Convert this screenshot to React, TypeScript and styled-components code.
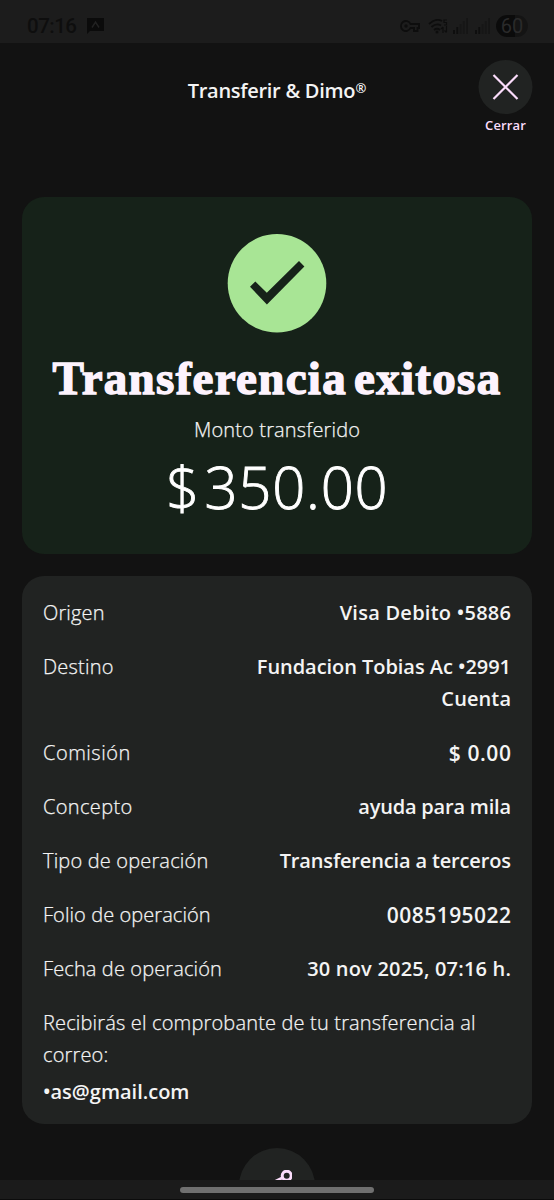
import React from "react";
import styled, { createGlobalStyle } from "styled-components";

const Global = createGlobalStyle`
  * { box-sizing: border-box; }
  html, body { margin: 0; background: #121212; }
  body { font-family: "Open Sans", "Noto Sans", sans-serif; color: #fff; }
`;

const Screen = styled.div`
  position: relative;
  width: 554px;
  height: 1200px;
  overflow: hidden;
  background: #121212;
  display: flex;
  flex-direction: column;
`;

const Text = styled.span<{ $size?: number; $weight?: number; $track?: number; $color?: string; $line?: number; $stroke?: number }>`
  font-size: ${(p) => p.$size ?? 20}px;
  font-weight: ${(p) => p.$weight ?? 300};
  letter-spacing: ${(p) => p.$track ?? 0}px;
  margin-right: ${(p) => -(p.$track ?? 0)}px;
  color: ${(p) => p.$color ?? "#f4f4f4"};
  line-height: ${(p) => p.$line ?? 32}px;
  white-space: nowrap;
  -webkit-text-stroke: ${(p) => p.$stroke ?? (p.$weight ? 0 : 0.25)}px currentColor;
`;

const StatusBar = styled.header`
  flex: none;
  height: 43px;
  padding: 9px 26px 0 27px;
  background: #1c1c1c;
  display: flex;
  justify-content: space-between;
`;

const StatusGroup = styled.div<{ $gap: number }>`
  display: flex;
  align-items: center;
  height: 34px;
  gap: ${(p) => p.$gap}px;
`;

const Clock = styled(Text)`
  font-family: Roboto, sans-serif;
`;

const WifiIcon = styled.svg`
  margin: 0 -2px 0 1px;
`;

const Battery = styled.div`
  width: 32px;
  height: 22px;
  margin-left: -1px;
  border-radius: 11px;
  background: linear-gradient(90deg, #0b0b0b 60%, #141414 60%);
  color: #2a2a2a;
  font: 400 20px/23px Roboto, sans-serif;
  text-align: center;
`;

const Header = styled.div`
  flex: none;
  height: 154px;
  padding: 17px 21px 0;
  display: grid;
  grid-template-columns: 1fr auto 1fr;
  align-items: start;
`;

const HeaderTitle = styled.div`
  grid-column: 2;
  padding-top: 15px;
  display: flex;
`;

const Mark = styled.span`
  font-size: 13px;
  font-weight: 600;
  line-height: 27px;
`;

const CloseButton = styled.button`
  justify-self: end;
  width: 55px;
  padding: 0;
  border: 0;
  background: none;
  font-family: inherit;
  display: flex;
  flex-direction: column;
  align-items: center;
`;

const Success = styled.section`
  flex: none;
  height: 357px;
  margin: 0 22px;
  padding-top: 37px;
  border-radius: 22px;
  background: #162219;
  display: flex;
  flex-direction: column;
  align-items: center;
`;

const Title = styled.h1`
  margin: 17px 0 8px;
  font-family: "Liberation Serif", serif;
  font-size: 47px;
  font-weight: 700;
  line-height: 56px;
  letter-spacing: 1.3px;
  word-spacing: -6px;
  color: #fdf3fd;
  white-space: nowrap;
  -webkit-text-stroke: 1.4px #fdf3fd;
`;

const Amount = styled.div`
  margin-top: 1px;
  display: flex;
  gap: 5px;
`;

const Details = styled.section`
  flex: none;
  height: 548px;
  margin: 22px 22px 0;
  padding: 21px 21px 0;
  border-radius: 22px;
  background: #212322;
`;

const Row = styled.div`
  display: flex;
  justify-content: space-between;
  margin-bottom: 22px;
`;

const Values = styled.div`
  display: flex;
  flex-direction: column;
  align-items: flex-end;
`;

const Notice = styled.div`
  display: flex;
  flex-direction: column;
  align-items: flex-start;
`;

const Email = styled.div`
  margin-top: 5px;
  display: flex;
`;

const ShareButton = styled.button`
  flex: none;
  align-self: center;
  width: 76px;
  height: 76px;
  margin-top: 24px;
  padding: 0;
  border: 0;
  border-radius: 50%;
  background: #212322;
  display: flex;
  align-items: center;
  justify-content: center;
`;

const NavBar = styled.footer`
  position: absolute;
  left: 0;
  right: 0;
  bottom: 0;
  height: 20px;
  padding-top: 7px;
  background: #1b1b1b;
  border-bottom: 1px solid #0c0c0c;
  display: flex;
  justify-content: center;
`;

const Handle = styled.div`
  width: 194px;
  height: 6px;
  border-radius: 3px;
  background: #707070;
`;

interface Value {
  text: string;
  track: number;
  size?: number;
}

const rows: { label: string; track: number; values: Value[] }[] = [
  { label: "Origen", track: 0.15, values: [{ text: "Visa Debito •5886", track: 0.25 }] },
  { label: "Destino", track: 0.2, values: [{ text: "Fundacion Tobias Ac •2991", track: -0.05 }, { text: "Cuenta", track: 0.1 }] },
  { label: "Comisión", track: 0.5, values: [{ text: "$ 0.00", track: 0.6, size: 21 }] },
  { label: "Concepto", track: 0.35, values: [{ text: "ayuda para mila", track: -0.2 }] },
  { label: "Tipo de operación", track: 0.17, values: [{ text: "Transferencia a terceros", track: -0.15 }] },
  { label: "Folio de operación", track: 0.07, values: [{ text: "0085195022", track: 0.45, size: 21 }] },
  { label: "Fecha de operación", track: 0.12, values: [{ text: "30 nov 2025, 07:16 h.", track: 0.2 }] },
];

const Signal = () => (
  <svg width="15" height="16" viewBox="0 0 15 16">
    <path d="M1 16V12M4.300 16V9" stroke="#0e0e0e" strokeWidth="1.900" />
    <path d="M7.500 16V6M10.800 16V3M14 16V0" stroke="#161616" strokeWidth="1.900" />
  </svg>
);

export default function App() {
  return (
    <Screen>
      <Global />
      <StatusBar>
        <StatusGroup $gap={10}>
          <Clock $size={20.5} $weight={500} $track={-0.5} $color="#0e0e0e">07:16</Clock>
          <svg width="17" height="16" viewBox="0 0 17 16">
            <path d="M0 0H17V13H3L0 16Z" fill="#0b0b0b" />
            <path d="M5 9.5L8.5 4L12 9.5" fill="none" stroke="#222" strokeWidth="1.4" />
          </svg>
        </StatusGroup>
        <StatusGroup $gap={7}>
          <svg width="20" height="12" viewBox="0 0 20 12">
            <path d="M10.5 4H19V8H17.5V11H14V8H10.5A5 5 0 1 1 10.5 4Z" fill="none" stroke="#0d0d0d" strokeWidth="1.8" />
            <circle cx="6" cy="6" r="1.7" fill="#0d0d0d" />
          </svg>
          <WifiIcon width="20" height="15" viewBox="0 0 20 15">
            <g fill="none" stroke="#0d0d0d" strokeWidth="1.8">
              <path d="M1 5Q8 -1.5 14 2M3.5 8Q8.500 3.500 13 6.500M6 11Q9 8.500 12 11" />
              <path d="M15 14V8M13 10L15 8M18.500 7V13M16.500 11.500L18.500 13.500" strokeWidth="1.2" />
              <path d="M19 1H16V3.500H18.500V6H16" strokeWidth="1.2" />
            </g>
            <circle cx="9" cy="13" r="1.5" fill="#0d0d0d" />
          </WifiIcon>
          <Signal />
          <Signal />
          <Battery>60</Battery>
        </StatusGroup>
      </StatusBar>
      <Header>
        <HeaderTitle>
          <Text $weight={600} $track={-0.28}>Transferir &amp; Dimo</Text>
          <Mark>®</Mark>
        </HeaderTitle>
        <CloseButton>
          <svg width="55" height="54" viewBox="0 0 55 54">
            <circle cx="27.500" cy="27" r="27" fill="#212322" />
            <path d="M15.500 15L39.500 39M39.500 15L15.500 39" stroke="#fbdcfb" strokeWidth="2.2" />
          </svg>
          <Text $size={13} $weight={600} $line={22} $track={0.15} $color="#fbdcfb">Cerrar</Text>
        </CloseButton>
      </Header>
      <Success>
        <svg width="100" height="99" viewBox="227 234 100 99">
          <circle cx="277" cy="283.300" r="49.300" fill="#a8e595" />
          <path d="M250 286.800L255.300 281.500L266.800 292.800L299 261L304.400 266.400L266.900 304.400Z" fill="#162219" />
        </svg>
        <Title>Transferencia exitosa</Title>
        <Text $track={0.15}>Monto transferido</Text>
        <Amount>
          <Text $size={58} $line={80} $stroke={0.9} $color="#fff">$</Text>
          <Text $size={58} $line={80} $track={0.8} $stroke={0.9} $color="#fff">350.00</Text>
        </Amount>
      </Success>
      <Details>
        {rows.map((r) => (
          <Row key={r.label}>
            <Text $track={r.track}>{r.label}</Text>
            <Values>
              {r.values.map((v) => (
                <Text key={v.text} $weight={600} $track={v.track} $size={v.size}>{v.text}</Text>
              ))}
            </Values>
          </Row>
        ))}
        <Notice>
          <Text $track={0.165}>Recibirás el comprobante de tu transferencia al</Text>
          <Text $track={0.15}>correo:</Text>
        </Notice>
        <Email>
          <Text $weight={600}>•as@gmail.com</Text>
        </Email>
      </Details>
      <ShareButton>
        <svg width="30" height="32" viewBox="262 1170 30 32">
          <g fill="none" stroke="#fbdcfb" strokeWidth="3">
            <circle cx="286.700" cy="1175.700" r="4.500" />
            <circle cx="267" cy="1186" r="4.500" />
            <circle cx="286.700" cy="1196" r="4.500" />
            <path d="M283 1177.500L271 1183.500M271 1188L282.500 1194" />
          </g>
        </svg>
      </ShareButton>
      <NavBar><Handle /></NavBar>
    </Screen>
  );
}
